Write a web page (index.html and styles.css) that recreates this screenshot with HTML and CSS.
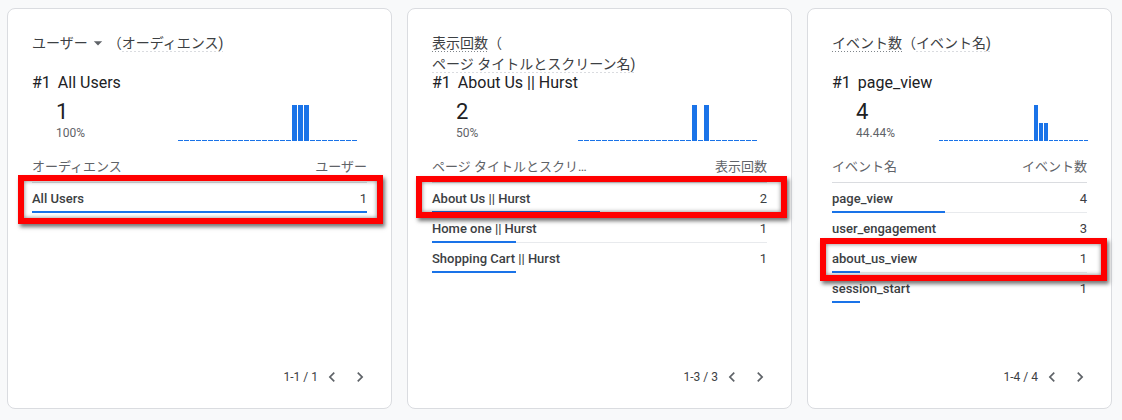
FILE: index.html
```html
<!DOCTYPE html>
<html lang="ja">
<head>
<meta charset="utf-8">
<title>Cards</title>
<link rel="stylesheet" href="styles.css">
</head>
<body>
<main class="board">

  <section class="card card--wide">
    <div class="card-title">
      <span class="metric metric--select">ユーザー<svg class="caret" viewBox="0 0 24 24" width="20" height="20"><path d="M7 10l5 5 5-5z"/></svg></span><span class="paren">（</span><span class="dim">オーディエンス)</span>
    </div>
    <div class="top"><span class="rank">#1</span><span class="top-name">All Users</span></div>
    <div class="summary">
      <div class="figure"><div class="value">1</div><div class="pct">100%</div></div>
      <div class="spark spark--wide">
        <i class="bar"></i><i class="bar"></i><i class="bar"></i><i class="bar"></i><i class="bar"></i><i class="bar"></i><i class="bar"></i><i class="bar"></i><i class="bar"></i><i class="bar"></i>
        <i class="bar"></i><i class="bar"></i><i class="bar"></i><i class="bar"></i><i class="bar"></i><i class="bar"></i><i class="bar"></i><i class="bar"></i><i class="bar"></i><i class="bar" style="height:100%"></i>
        <i class="bar" style="height:100%"></i><i class="bar" style="height:100%"></i><i class="bar"></i><i class="bar"></i><i class="bar"></i><i class="bar"></i><i class="bar"></i><i class="bar"></i><i class="bar"></i><i class="bar"></i>
      </div>
    </div>
    <div class="thead"><span class="th-left">オーディエンス</span><span class="th-right">ユーザー</span></div>
    <div class="rows">
      <div class="row"><div class="cells"><span class="name">All Users</span><span class="num">1</span></div><div class="track"><div class="fill" style="width:100%"></div></div></div>
    </div>
    <div class="pager">
      <span class="range">1-1 / 1</span>
      <span class="nav"><svg viewBox="0 0 24 24" width="20" height="20"><path d="M15.41 7.41L14 6l-6 6 6 6 1.41-1.41L10.83 12z"/></svg></span>
      <span class="nav"><svg viewBox="0 0 24 24" width="20" height="20"><path d="M10 6L8.59 7.41 13.17 12l-4.58 4.59L10 18l6-6z"/></svg></span>
    </div>
    <div class="callout callout--a"></div>
  </section>

  <section class="card card--wide">
    <div class="card-title">
      <span class="metric metric--dashed">表示回数</span><span class="paren">（</span><span class="dim">ページ タイトルとスクリーン名)</span>
    </div>
    <div class="top"><span class="rank">#1</span><span class="top-name">About Us || Hurst</span></div>
    <div class="summary">
      <div class="figure"><div class="value">2</div><div class="pct">50%</div></div>
      <div class="spark spark--wide">
        <i class="bar"></i><i class="bar"></i><i class="bar"></i><i class="bar"></i><i class="bar"></i><i class="bar"></i><i class="bar"></i><i class="bar"></i><i class="bar"></i><i class="bar"></i>
        <i class="bar"></i><i class="bar"></i><i class="bar"></i><i class="bar"></i><i class="bar"></i><i class="bar"></i><i class="bar"></i><i class="bar"></i><i class="bar"></i><i class="bar" style="height:100%"></i>
        <i class="bar"></i><i class="bar" style="height:100%"></i><i class="bar"></i><i class="bar"></i><i class="bar"></i><i class="bar"></i><i class="bar"></i><i class="bar"></i><i class="bar"></i><i class="bar"></i>
      </div>
    </div>
    <div class="thead"><span class="th-left">ページ タイトルとスクリーン名</span><span class="th-right">表示回数</span></div>
    <div class="rows">
      <div class="row"><div class="cells"><span class="name">About Us || Hurst</span><span class="num">2</span></div><div class="track"><div class="fill" style="width:50%"></div></div></div>
      <div class="row"><div class="cells"><span class="name">Home one || Hurst</span><span class="num">1</span></div><div class="track"><div class="fill" style="width:25%"></div></div></div>
      <div class="row"><div class="cells"><span class="name">Shopping Cart || Hurst</span><span class="num">1</span></div><div class="track"><div class="fill" style="width:25%"></div></div></div>
    </div>
    <div class="pager">
      <span class="range">1-3 / 3</span>
      <span class="nav"><svg viewBox="0 0 24 24" width="20" height="20"><path d="M15.41 7.41L14 6l-6 6 6 6 1.41-1.41L10.83 12z"/></svg></span>
      <span class="nav"><svg viewBox="0 0 24 24" width="20" height="20"><path d="M10 6L8.59 7.41 13.17 12l-4.58 4.59L10 18l6-6z"/></svg></span>
    </div>
    <div class="callout callout--b"></div>
  </section>

  <section class="card card--narrow">
    <div class="card-title">
      <span class="metric metric--dashed">イベント数</span><span class="paren">（</span><span class="dim">イベント名)</span>
    </div>
    <div class="top"><span class="rank">#1</span><span class="top-name">page_view</span></div>
    <div class="summary">
      <div class="figure"><div class="value">4</div><div class="pct">44.44%</div></div>
      <div class="spark spark--narrow">
        <i class="bar"></i><i class="bar"></i><i class="bar"></i><i class="bar"></i><i class="bar"></i><i class="bar"></i><i class="bar"></i><i class="bar"></i><i class="bar"></i><i class="bar"></i>
        <i class="bar"></i><i class="bar"></i><i class="bar"></i><i class="bar"></i><i class="bar"></i><i class="bar"></i><i class="bar"></i><i class="bar"></i><i class="bar"></i><i class="bar" style="height:100%"></i>
        <i class="bar" style="height:50%"></i><i class="bar" style="height:50%"></i><i class="bar"></i><i class="bar"></i><i class="bar"></i><i class="bar"></i><i class="bar"></i><i class="bar"></i><i class="bar"></i><i class="bar"></i>
      </div>
    </div>
    <div class="thead"><span class="th-left">イベント名</span><span class="th-right">イベント数</span></div>
    <div class="rows">
      <div class="row"><div class="cells"><span class="name">page_view</span><span class="num">4</span></div><div class="track"><div class="fill" style="width:44.44%"></div></div></div>
      <div class="row"><div class="cells"><span class="name">user_engagement</span><span class="num">3</span></div><div class="track"><div class="fill" style="width:33.33%"></div></div></div>
      <div class="row"><div class="cells"><span class="name">about_us_view</span><span class="num">1</span></div><div class="track"><div class="fill" style="width:11.11%"></div></div></div>
      <div class="row"><div class="cells"><span class="name">session_start</span><span class="num">1</span></div><div class="track"><div class="fill" style="width:11.11%"></div></div></div>
    </div>
    <div class="pager">
      <span class="range">1-4 / 4</span>
      <span class="nav"><svg viewBox="0 0 24 24" width="20" height="20"><path d="M15.41 7.41L14 6l-6 6 6 6 1.41-1.41L10.83 12z"/></svg></span>
      <span class="nav"><svg viewBox="0 0 24 24" width="20" height="20"><path d="M10 6L8.59 7.41 13.17 12l-4.58 4.59L10 18l6-6z"/></svg></span>
    </div>
    <div class="callout callout--c"></div>
  </section>

</main>
</body>
</html>
```

FILE: styles.css
```css
* { box-sizing: border-box; }

html, body {
  margin: 0;
  background: #f8f9fa;
}

body {
  font-family: Roboto, "Noto Sans CJK JP", sans-serif;
  color: #3c4043;
}

.board {
  display: flex;
  gap: 15px;
  padding: 8px 10px 11px 7px;
  align-items: flex-start;
}

.card {
  position: relative;
  height: 401px;
  background: #fff;
  border: 1px solid #dadce0;
  border-radius: 8px;
  padding: 24px 24px 21px;
  display: flex;
  flex-direction: column;
}

.card--wide { width: 385px; }
.card--narrow { width: 305px; }

/* title */
.card-title {
  display: flex;
  flex-wrap: wrap;
  align-items: flex-start;
  max-width: 250px;
  min-height: 40px;
  font-size: 14px;
  line-height: 20px;
  color: #3c4043;
}

.metric, .dim {
  white-space: nowrap;
}

.metric--select {
  display: inline-flex;
  align-items: center;
}

.caret {
  fill: #5f6368;
  display: block;
}

.metric--dashed {
  background: linear-gradient(to right, #80868b 50%, transparent 50%) left bottom / 3px 1px repeat-x;
  height: 19px;
}

.dim {
  background: linear-gradient(to right, #dadce0 60%, transparent 60%) left bottom / 4px 1px repeat-x;
  height: 19px;
}

.top {
  padding-top: 1px;
  font-size: 16px;
  line-height: 18px;
  color: #202124;
  display: flex;
}

.rank { margin-right: 7px; }

/* summary */
.summary {
  display: flex;
  align-items: flex-end;
}

.figure {
  padding-left: 24px;
  margin-top: 7px;
}

.value {
  font-size: 22px;
  line-height: 26px;
  color: #202124;
}

.pct {
  font-size: 12px;
  line-height: 16px;
  color: #5f6368;
}

.spark {
  margin-left: auto;
  height: 36px;
  display: flex;
  align-items: flex-end;
  gap: 1px;
}

.spark--wide { width: 179px; margin-right: 10px; }
.spark--narrow { width: 149px; margin-right: -1px; }

.bar {
  flex: 1;
  height: 1px;
  background: #1a73e8;
}

/* table */
.thead {
  margin-top: 16px;
  display: flex;
  justify-content: space-between;
  gap: 8px;
  font-size: 13px;
  line-height: 20px;
  color: #5f6368;
  padding-bottom: 5px;
  border-bottom: 1px solid #dadce0;
}

.th-left {
  max-width: 47%;
  white-space: nowrap;
  overflow: hidden;
  text-overflow: ellipsis;
}

.th-right { white-space: nowrap; }

.row { display: flex; flex-direction: column; }

.cells {
  display: flex;
  justify-content: space-between;
  padding-top: 4px;
  font-size: 13px;
  line-height: 24px;
  font-weight: 500;
  color: #3c4043;
}

.num { font-weight: 400; }

.track {
  height: 2px;
  background: linear-gradient(to top, #e8eaed 1px, transparent 1px);
}

.row:last-child .track { background: none; }

.fill {
  height: 2px;
  background: #1a73e8;
}

/* pager */
.pager {
  margin-top: auto;
  margin-right: -3px;
  display: flex;
  justify-content: flex-end;
  align-items: center;
  height: 20px;
  font-size: 12px;
  color: #3c4043;
}

.range { margin-right: 4px; }

.nav {
  display: flex;
  width: 20px;
  height: 20px;
}

.nav + .nav { margin-left: 8px; }

.nav svg { fill: #5f6368; }

/* red annotation boxes */
.callout {
  position: absolute;
  border: 6px solid #ff0000;
  box-shadow: 2px 3px 4px rgba(0, 0, 0, 0.55), inset 0 0 4px rgba(0, 0, 0, 0.5);
  pointer-events: none;
}

.callout--a { left: 10px; top: 166px; width: 365px; height: 49px; }
.callout--b { left: 8px; top: 167px; width: 371px; height: 42px; }
.callout--c { left: 12px; top: 229px; width: 287px; height: 43px; }
```
